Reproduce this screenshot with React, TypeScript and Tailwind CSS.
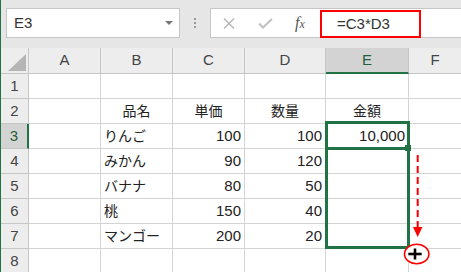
import React from "react";

const colLetters = ["A", "B", "C", "D", "E", "F"];

const rows: string[][] = [
  ["", "", "", "", "", ""],
  ["", "品名", "単価", "数量", "金額", ""],
  ["", "りんご", "100", "100", "10,000", ""],
  ["", "みかん", "90", "120", "", ""],
  ["", "バナナ", "80", "50", "", ""],
  ["", "桃", "150", "40", "", ""],
  ["", "マンゴー", "200", "20", "", ""],
  ["", "", "", "", "", ""],
];

function Cell({ r, c, v }: { r: number; c: number; v: string }) {
  const last = c === 5;
  const base = last
    ? "border-b border-[#d4d4d4] flex items-center"
    : "border-r border-b border-[#d4d4d4] flex items-center";
  let align = "";
  if (r === 1) {
    align = "justify-center text-[14px] text-[#222]";
  } else if (c === 1) {
    align = "justify-start pl-[3px] text-[14px] text-[#222]";
  } else {
    align = "justify-end pr-[3px] text-[15px] text-[#222]";
  }
  return <div className={`${base} ${align}`}>{v}</div>;
}

export default function App() {
  return (
    <div className="relative w-[461px] h-[272px] overflow-hidden bg-white flex font-[family-name:'Liberation_Sans','Noto_Sans_CJK_JP',sans-serif]">
      <div className="w-px h-full bg-[#217346] shrink-0" />
      <div className="flex-1 flex flex-col">
        {/* formula bar */}
        <div className="h-[48px] bg-[#e6e6e6] flex items-start pt-[8px] pl-[5px] shrink-0">
          <div className="w-[174px] h-[30px] border border-[#c6c6c6] bg-white flex items-center justify-between pl-[7px] pr-[6px]">
            <span className="text-[15px] text-[#333]">E3</span>
            <svg width="8" height="5" viewBox="0 0 8 5">
              <polygon points="0,0 8,0 4,4" fill="#777" />
            </svg>
          </div>
          <div className="w-[30px] h-[30px] flex flex-col items-center justify-center gap-[2px]">
            <div className="w-[2px] h-[2px] bg-[#9a9a9a]" />
            <div className="w-[2px] h-[2px] bg-[#9a9a9a]" />
            <div className="w-[2px] h-[2px] bg-[#9a9a9a]" />
          </div>
          <div className="flex-1 h-[30px] border border-r-0 border-[#c6c6c6] bg-white flex items-end">
            <div className="h-full flex items-center pl-[12px]">
              <svg width="12" height="11" viewBox="0 0 12 11">
                <line x1="1" y1="0.5" x2="11" y2="10.5" stroke="#b4b4b4" strokeWidth="1.4" />
                <line x1="11" y1="0.5" x2="1" y2="10.5" stroke="#b4b4b4" strokeWidth="1.4" />
              </svg>
              <svg width="15" height="11" viewBox="0 0 15 11" className="ml-[23px]">
                <polyline points="1,5.5 5,9.5 14,1" fill="none" stroke="#c2c2c2" strokeWidth="2.2" />
              </svg>
              <span className="ml-[22px] w-[13px] italic font-[family-name:'Liberation_Serif',serif] text-[16px] leading-none text-[#555]">
                f<span className="text-[12px]">x</span>
              </span>
            </div>
            <div className="ml-[12px] w-[101px] h-[28px] border-2 border-[#ff0000] flex items-center pl-[15px] text-[15px] text-[#333] mb-[-1px]">
              =C3*D3
            </div>
          </div>
        </div>
        {/* grid */}
        <div className="grid grid-cols-[28px_72px_72px_72px_81px_83px_1fr] grid-rows-[26px_repeat(8,25px)]">
          {/* header row */}
          <div className="border-r border-b border-[#c6c6c6] bg-[#ededed] flex items-end justify-end pr-[2px] pb-[2px]">
            <svg width="18" height="17" viewBox="0 0 18 17">
              <polygon points="18,0 18,17 0,17" fill="#b5b5b5" />
            </svg>
          </div>
          {colLetters.map((l, i) =>
            i === 4 ? (
              <div
                key={l}
                className="border-r border-[#c6c6c6] border-b-2 border-b-[#217346] bg-[#d3d3d3] flex items-center justify-center text-[15px] text-[#1f5f3a]"
              >
                {l}
              </div>
            ) : i === 5 ? (
              <div
                key={l}
                className="border-b border-[#c6c6c6] bg-[#ededed] flex items-center justify-center text-[15px] text-[#444]"
              >
                {l}
              </div>
            ) : (
              <div
                key={l}
                className="border-r border-b border-[#c6c6c6] bg-[#ededed] flex items-center justify-center text-[15px] text-[#444]"
              >
                {l}
              </div>
            )
          )}
          {rows.map((row, r) => (
            <React.Fragment key={r}>
              {r === 2 ? (
                <div className="border-r-2 border-r-[#217346] border-b border-b-[#c6c6c6] bg-[#d3d3d3] flex items-center justify-center text-[15px] text-[#1f5f3a]">
                  {r + 1}
                </div>
              ) : (
                <div className="border-r border-b border-[#c6c6c6] bg-[#ededed] flex items-center justify-center text-[15px] text-[#444]">
                  {r + 1}
                </div>
              )}
              {row.map((v, c) => (
                <Cell key={c} r={r} c={c} v={v} />
              ))}
            </React.Fragment>
          ))}
        </div>
      </div>

      {/* selection overlay */}
      <div className="absolute left-[325px] top-[121px] w-[85px] h-[128px] border-[3px] border-[#217346] pointer-events-none" />
      <div className="absolute left-[325px] top-[147px] w-[85px] h-[3px] bg-[#217346]" />
      <div className="absolute left-[405px] top-[145px] w-[6px] h-[6px] bg-[#217346]" />

      {/* drag annotation */}
      <svg className="absolute left-0 top-0 pointer-events-none" width="461" height="272" viewBox="0 0 461 272">
        <line x1="417.7" y1="155" x2="417.7" y2="228" stroke="#ff0000" strokeWidth="2" strokeDasharray="7 4" />
        <polygon points="413,227 422.4,227 417.7,237" fill="#ff0000" />
        <ellipse cx="416.7" cy="254" rx="12.2" ry="9.8" fill="#ffffff" stroke="#ff0000" strokeWidth="1.6" />
        <line x1="408.3" y1="254" x2="421.7" y2="254" stroke="#000" strokeWidth="2.6" />
        <line x1="415" y1="248.5" x2="415" y2="259.5" stroke="#000" strokeWidth="2.6" />
      </svg>
    </div>
  );
}
